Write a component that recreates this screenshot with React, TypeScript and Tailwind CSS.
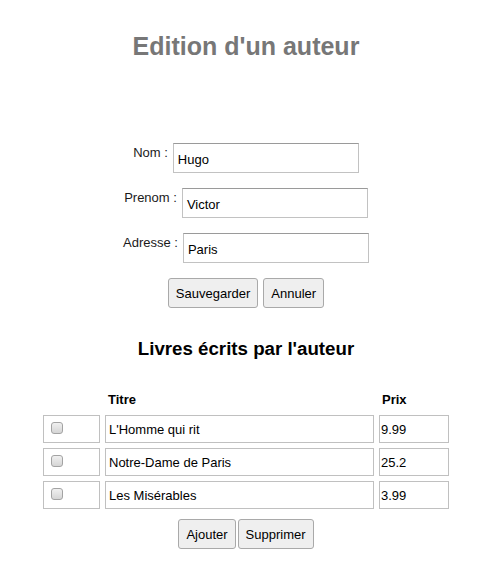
const livres = [
  { titre: "L'Homme qui rit", prix: "9.99" },
  { titre: "Notre-Dame de Paris", prix: "25.2" },
  { titre: "Les Misérables", prix: "3.99" },
];

const champs = [
  { label: "Nom :", valeur: "Hugo" },
  { label: "Prenom :", valeur: "Victor" },
  { label: "Adresse :", valeur: "Paris" },
];

function Bouton({ children }: { children: React.ReactNode }) {
  return (
    <button className="h-[30px] px-[7px] border border-[#a9a9a9] rounded-[3px] bg-[#efefef] text-[13px] leading-none text-black">
      {children}
    </button>
  );
}

function CaseACocher() {
  return (
    <div className="w-[12px] h-[12px] rounded-[3px] border border-[#a3a3a3] bg-linear-to-b from-[#f0f0f0] to-[#d5d5d5]" />
  );
}

export default function App() {
  return (
    <div className="min-h-screen bg-white font-['Liberation_Sans',Arial,sans-serif] text-[13px] text-black">
      <h1 className="pt-[32px] text-center text-[25px] leading-[29px] font-bold text-[#777777]">
        Edition d'un auteur
      </h1>

      <div className="mt-[82px] flex flex-col gap-[15px]">
        {champs.map((c) => (
          <div key={c.label} className="flex justify-center items-start gap-[5px]">
            <span className="mt-[2px] leading-[15px] text-[#1a1a1a]">{c.label}</span>
            <div className="w-[186px] h-[30px] border border-[#c2c2c2] border-t-[#9a9a9a] pl-[4px] pt-[8px] leading-[15px]">
              {c.valeur}
            </div>
          </div>
        ))}
      </div>

      <div className="mt-[15px] flex justify-center gap-[5px]">
        <Bouton>Sauvegarder</Bouton>
        <Bouton>Annuler</Bouton>
      </div>

      <h3 className="mt-[30px] text-center text-[18.7px] leading-[22px] font-bold">
        Livres écrits par l'auteur
      </h3>

      <div className="mt-[32px] mx-auto w-[406px]">
        <div className="grid grid-cols-[57px_269px_70px] gap-x-[5px] h-[15px] leading-[15px] font-bold">
          <div />
          <div className="pl-[3px]">Titre</div>
          <div className="pl-[3px]">Prix</div>
        </div>
        <div className="mt-[8px] grid grid-cols-[57px_269px_70px] gap-[5px]">
          {livres.map((l) => (
            <div key={l.titre} className="contents">
              <div className="h-[28px] border border-[#c0c0c0] pl-[7px] pt-[6px]">
                <CaseACocher />
              </div>
              <div className="h-[28px] border border-[#c0c0c0] pl-[3px] pt-[6px] leading-[15px]">
                {l.titre}
              </div>
              <div className="h-[28px] border border-[#c0c0c0] pl-[1px] pt-[6px] leading-[15px]">
                {l.prix}
              </div>
            </div>
          ))}
        </div>
      </div>

      <div className="mt-[10px] flex justify-center gap-[2px]">
        <Bouton>Ajouter</Bouton>
        <Bouton>Supprimer</Bouton>
      </div>
    </div>
  );
}
